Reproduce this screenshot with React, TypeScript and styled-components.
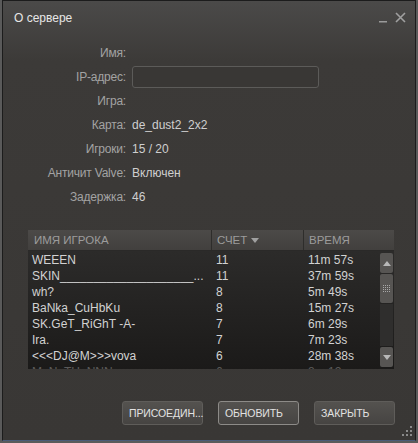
import { Fragment } from 'react';
import styled, { createGlobalStyle } from 'styled-components';

const Global = createGlobalStyle`
  html, body {
    margin: 0;
    padding: 0;
    background: #5a5a5a;
    font-family: "Liberation Sans", Arial, sans-serif;
  }
`;

const Window = styled.div`
  box-sizing: border-box;
  width: 414px;
  height: 441px;
  margin-left: 2px;
  border: 1px solid #1c1c1c;
  border-bottom-color: #4a5a78;
  background: linear-gradient(#4b4a49 0px, #3c3a38 60px, #393735 100%);
  display: flex;
  flex-direction: column;
  position: relative;
  overflow: hidden;
`;

const TitleBar = styled.div`
  height: 33px;
  display: flex;
  align-items: center;
  justify-content: space-between;
  padding: 0 9px 0 11px;
`;

const Title = styled.span`
  color: #e6e6e6;
  font-size: 12px;
`;

const Controls = styled.div`
  display: flex;
  align-items: center;
  gap: 7px;
`;

const InfoGrid = styled.div`
  display: grid;
  grid-template-columns: 123px 1fr;
  grid-auto-rows: 24px;
  column-gap: 6px;
  align-items: center;
  margin-top: 7px;
  font-size: 12px;
`;

const Label = styled.span`
  text-align: right;
  color: #a3a3a3;
  letter-spacing: -0.2px;
`;

const Value = styled.span`
  color: #cfcfcf;
`;

const Field = styled.div`
  width: 187px;
  height: 22px;
  box-sizing: border-box;
  border: 1px solid #5c5b59;
  border-radius: 3px;
  background: #393735;
`;

const Table = styled.div`
  margin: 21px 0 0 25px;
  width: 366px;
  height: 139px;
  display: flex;
  flex-direction: column;
  overflow: hidden;
  font-size: 12px;
`;

const Header = styled.div`
  height: 20px;
  flex: none;
  display: grid;
  grid-template-columns: 183px 92px 1fr;
  background: linear-gradient(#4c4a48, #42403e);
  border-bottom: 1px solid #2a2928;
`;

const HeadCell = styled.div<{ $divider?: boolean }>`
  display: flex;
  align-items: center;
  gap: 4px;
  padding-left: ${p => (p.$divider ? '5px' : '6px')};
  color: #9c9c9c;
  font-size: 11.5px;
  border-left: ${p => (p.$divider ? '1px solid #2e2d2b' : 'none')};
`;

const Body = styled.div`
  flex: 1;
  display: flex;
  background: linear-gradient(#2c2b2a, #1b1a19);
  overflow: hidden;
`;

const Rows = styled.div`
  flex: 1;
  min-width: 0;
  padding-top: 1px;
`;

const Row = styled.div<{ $faded?: boolean }>`
  height: 16px;
  display: grid;
  grid-template-columns: 183px 92px 1fr;
  align-items: center;
  color: #d2d2d2;
  opacity: ${p => (p.$faded ? 0.35 : 1)};
`;

const Cell = styled.span<{ $first?: boolean }>`
  padding-left: ${p => (p.$first ? '4px' : '5px')};
  white-space: nowrap;
`;

const Scrollbar = styled.div`
  width: 17px;
  flex: none;
  display: flex;
  flex-direction: column;
  align-items: center;
  padding: 2px 0 2px 2px;
  box-sizing: border-box;
  gap: 1px;
`;

const ScrollButton = styled.div`
  width: 13px;
  height: 20px;
  flex: none;
  background: #575553;
  border-radius: 2px;
  display: flex;
  align-items: center;
  justify-content: center;
`;

const Thumb = styled.div`
  width: 13px;
  height: 29px;
  background: #575553;
  border-radius: 2px;
  display: flex;
  align-items: center;
  justify-content: center;
`;

const Track = styled.div`
  width: 13px;
  flex: 1;
  background: #2f2e2d;
`;

const ButtonRow = styled.div`
  display: flex;
  justify-content: flex-end;
  gap: 15px;
  margin: 32px 20px 0 0;
`;

const Button = styled.button<{ $focused?: boolean }>`
  width: 81px;
  height: 24px;
  box-sizing: border-box;
  padding: 0 6px;
  text-align: left;
  font-family: inherit;
  font-size: 10.5px;
  letter-spacing: -0.1px;
  color: #e2e2e2;
  background: linear-gradient(#54524f, #464442);
  border: 1px solid ${p => (p.$focused ? '#8d8b88' : '#5f5d5a')};
  border-radius: 3px;
  white-space: nowrap;
`;

const Grip = styled.svg`
  position: absolute;
  right: 3px;
  bottom: 4px;
`;

const players: [string, string, string][] = [
  ['WEEEN', '11', '11m 57s'],
  ['SKIN____________________...', '11', '37m 59s'],
  ['wh?', '8', '5m 49s'],
  ['BaNka_CuHbKu', '8', '15m 27s'],
  ['SK.GeT_RiGhT -A-', '7', '6m 29s'],
  ['Ira.', '7', '7m 23s'],
  ['<<<DJ@M>>>vova', '6', '28m 38s'],
  ['MoNoTHoNNN', '6', '8m 12s'],
];

const info: [string, string][] = [
  ['Игра:', ''],
  ['Карта:', 'de_dust2_2x2'],
  ['Игроки:', '15 / 20'],
  ['Античит Valve:', 'Включен'],
  ['Задержка:', '46'],
];

export default function App() {
  return (
    <>
      <Global />
      <Window>
        <TitleBar>
          <Title>О сервере</Title>
          <Controls>
            <svg width="9" height="12" viewBox="0 0 9 12">
              <rect x="0" y="9" width="8" height="1.5" fill="#9a9a9a" />
            </svg>
            <svg width="11" height="11" viewBox="0 0 11 11">
              <path d="M1 1 L10 10 M10 1 L1 10" stroke="#a0a0a0" strokeWidth="1.6" />
            </svg>
          </Controls>
        </TitleBar>

        <InfoGrid>
          <Label>Имя:</Label>
          <Value />
          <Label>IP-адрес:</Label>
          <Field />
          {info.map(([k, v]) => (
            <Fragment key={k}>
              <Label>{k}</Label>
              <Value>{v}</Value>
            </Fragment>
          ))}
        </InfoGrid>

        <Table>
          <Header>
            <HeadCell>ИМЯ ИГРОКА</HeadCell>
            <HeadCell $divider>
              СЧЕТ
              <svg width="8" height="5" viewBox="0 0 8 5">
                <path d="M0 0 H8 L4 5 Z" fill="#a0a0a0" />
              </svg>
            </HeadCell>
            <HeadCell $divider>ВРЕМЯ</HeadCell>
          </Header>
          <Body>
            <Rows>
              {players.map(([name, score, time], i) => (
                <Row key={name} $faded={i === 7}>
                  <Cell $first>{name}</Cell>
                  <Cell>{score}</Cell>
                  <Cell>{time}</Cell>
                </Row>
              ))}
            </Rows>
            <Scrollbar>
              <ScrollButton>
                <svg width="8" height="5" viewBox="0 0 8 5">
                  <path d="M0 5 H8 L4 0 Z" fill="#b8b8b8" />
                </svg>
              </ScrollButton>
              <Thumb>
                <svg width="7" height="7" viewBox="0 0 7 7" fill="#a8a8a8">
                  {[0, 2, 4, 6].map(y =>
                    [0, 2, 4, 6].map(x => <rect key={`${x}-${y}`} x={x} y={y} width="1" height="1" />)
                  )}
                </svg>
              </Thumb>
              <Track />
              <ScrollButton>
                <svg width="8" height="5" viewBox="0 0 8 5">
                  <path d="M0 0 H8 L4 5 Z" fill="#b8b8b8" />
                </svg>
              </ScrollButton>
            </Scrollbar>
          </Body>
        </Table>

        <ButtonRow>
          <Button>ПРИСОЕДИН...</Button>
          <Button $focused>ОБНОВИТЬ</Button>
          <Button>ЗАКРЫТЬ</Button>
        </ButtonRow>

        <Grip width="10" height="10" viewBox="0 0 10 10" fill="#8a8a8a">
          <rect x="8" y="0" width="2" height="2" />
          <rect x="4" y="4" width="2" height="2" />
          <rect x="8" y="4" width="2" height="2" />
          <rect x="0" y="8" width="2" height="2" />
          <rect x="4" y="8" width="2" height="2" />
          <rect x="8" y="8" width="2" height="2" />
        </Grip>
      </Window>
    </>
  );
}
